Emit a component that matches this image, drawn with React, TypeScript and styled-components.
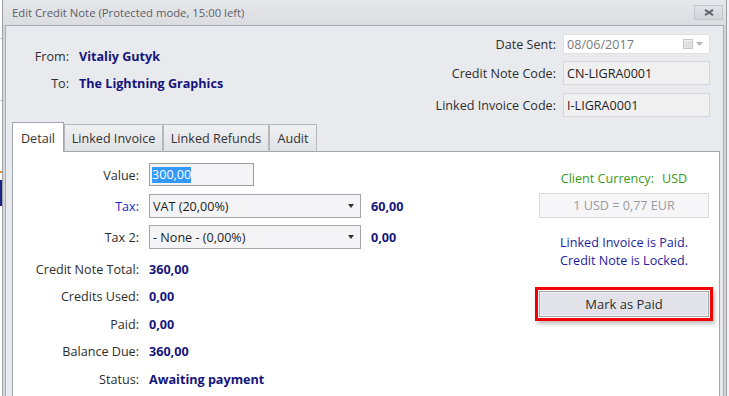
import React from "react";
import styled, { createGlobalStyle } from "styled-components";

const GlobalStyle = createGlobalStyle`
  html, body {
    margin: 0;
    padding: 0;
  }
  body {
    background: #f4f4f4;
    font-family: "Open Sans", "Noto Sans", "Liberation Sans", sans-serif;
    font-size: 12.6px;
    color: #2e2e2e;
    overflow: hidden;
  }
`;

const App: React.FC = () => {
  return (
    <>
      <GlobalStyle />
      <Screen>
        <Backdrop />
        <Window>
          <TitleBar>
            <Title>Edit Credit Note (Protected mode, 15:00 left)</Title>
            <CloseButton>
              <svg width="10" height="7" viewBox="0 0 10 7">
                <path d="M1 0.8 L9 6.2 M9 0.8 L1 6.2" stroke="#66686e" strokeWidth="2" />
              </svg>
            </CloseButton>
          </TitleBar>

          <Body>
            <Header>
              <Parties>
                <PartyLabel>From:</PartyLabel>
                <PartyName>Vitaliy Gutyk</PartyName>
                <PartyLabel>To:</PartyLabel>
                <PartyName>The Lightning Graphics</PartyName>
              </Parties>

              <Codes>
                <CodeRow $h={20} $top={8}>
                  <CodeLabel>Date Sent:</CodeLabel>
                  <DateBox>
                    <span>08/06/2017</span>
                    <CalendarIcon>
                      <svg width="10" height="10" viewBox="0 0 10 10">
                        <rect x="0.5" y="0.5" width="9" height="9" fill="#f4f4f4" stroke="#c4c4c4" />
                        <path d="M0.5 3 H9.5 M0.5 5.3 H9.5 M0.5 7.6 H9.5 M3 3 V9.5 M5.3 3 V9.5 M7.6 3 V9.5" stroke="#d0d0d0" strokeWidth="0.8" />
                      </svg>
                      <svg width="7" height="4" viewBox="0 0 7 4">
                        <path d="M0 0 H7 L3.5 4 Z" fill="#b4b4b8" />
                      </svg>
                    </CalendarIcon>
                  </DateBox>
                </CodeRow>
                <CodeRow $h={24} $top={7}>
                  <CodeLabel>Credit Note Code:</CodeLabel>
                  <CodeBox>CN-LIGRA0001</CodeBox>
                </CodeRow>
                <CodeRow $h={24} $top={8}>
                  <CodeLabel>Linked Invoice Code:</CodeLabel>
                  <CodeBox>I-LIGRA0001</CodeBox>
                </CodeRow>
              </Codes>
            </Header>

            <Tabs>
              <Tab $active $w={52}>Detail</Tab>
              <Tab $w={99}>Linked Invoice</Tab>
              <Tab $w={106}>Linked Refunds</Tab>
              <Tab $w={48}>Audit</Tab>
            </Tabs>

            <Panel>
              <Form>
                <Row $h={31}>
                  <Label>Value:</Label>
                  <ValueInput>
                    <Selected>300,00</Selected>
                  </ValueInput>
                </Row>
                <Row $h={31}>
                  <Label $link>Tax:</Label>
                  <Select>
                    <span>VAT (20,00%)</span>
                    <Caret />
                  </Select>
                  <Amount>60,00</Amount>
                </Row>
                <Row $h={31}>
                  <Label>Tax 2:</Label>
                  <Select>
                    <span>- None - (0,00%)</span>
                    <Caret />
                  </Select>
                  <Amount>0,00</Amount>
                </Row>
                <Row $h={27.5} $top={3}>
                  <Label>Credit Note Total:</Label>
                  <Amount>360,00</Amount>
                </Row>
                <Row $h={27.5}>
                  <Label>Credits Used:</Label>
                  <Amount>0,00</Amount>
                </Row>
                <Row $h={27.5}>
                  <Label>Paid:</Label>
                  <Amount>0,00</Amount>
                </Row>
                <Row $h={27.5}>
                  <Label>Balance Due:</Label>
                  <Amount>360,00</Amount>
                </Row>
                <Row $h={27.5}>
                  <Label>Status:</Label>
                  <Amount>Awaiting payment</Amount>
                </Row>
              </Form>

              <SideColumn>
                <Currency>
                  Client Currency:<CurrencyCode>USD</CurrencyCode>
                </Currency>
                <RateBox>1 USD = 0,77 EUR</RateBox>
                <Notice>
                  Linked Invoice is Paid.
                  <br />
                  Credit Note is Locked.
                </Notice>
                <Highlight>
                  <ActionButton type="button">Mark as Paid</ActionButton>
                </Highlight>
              </SideColumn>
            </Panel>
          </Body>
        </Window>
      </Screen>
    </>
  );
};

export default App;

const Screen = styled.div`
  display: flex;
  width: 729px;
  height: 396px;
  overflow: hidden;
`;

// bits of the application behind the dialog
const Backdrop = styled.div`
  width: 2px;
  flex-shrink: 0;
  background: linear-gradient(
    to bottom,
    #ffffff 0 38px,
    #c8c8c8 38px 39px,
    #ffffff 39px 100px,
    #c8c8c8 100px 101px,
    #ffffff 101px 171px,
    #e8862a 171px 173px,
    #ffffff 173px 180px,
    #1c2484 180px 206px,
    #ffffff 206px
  );
`;

const Window = styled.div`
  width: 723px;
  height: 396px;
  display: flex;
  flex-direction: column;
  border-left: 1px solid #9c9ea6;
  border-right: 1px solid #9c9ea6;
  background: #d6d7dc;
`;

const TitleBar = styled.div`
  height: 25px;
  flex-shrink: 0;
  display: flex;
  align-items: center;
  justify-content: space-between;
  padding: 0 3px 0 9px;
  background: linear-gradient(#e6e7ea, #dcdde1);
`;

const Title = styled.div`
  color: #5c5f66;
  font-size: 11.3px;
  padding-bottom: 1px;
`;

const CloseButton = styled.div`
  width: 27px;
  height: 13px;
  display: flex;
  align-items: center;
  justify-content: center;
  border: 1px solid #c4c5ca;
  background: linear-gradient(#e2e3e7, #d4d5da);
`;

const Body = styled.div`
  flex: 1;
  min-height: 0;
  display: flex;
  flex-direction: column;
  margin: 0 2px;
  padding: 0 3px 0 6px;
  border: 1px solid #a9abb2;
  border-bottom: none;
  background: #e9eaee;
`;

const Header = styled.div`
  height: 97px;
  flex-shrink: 0;
  display: flex;
  justify-content: space-between;
  padding-right: 10px;
`;

const Parties = styled.div`
  display: grid;
  grid-template-columns: 57px auto;
  column-gap: 10px;
  row-gap: 9px;
  align-content: start;
  margin-top: 22px;
  line-height: 18px;
`;

const PartyLabel = styled.div`
  text-align: right;
  color: #2e2e2e;
`;

const PartyName = styled.div`
  font-weight: 700;
  color: #14147c;
`;

const Codes = styled.div`
  display: flex;
  flex-direction: column;
`;

const CodeRow = styled.div<{ $h: number; $top: number }>`
  display: flex;
  align-items: center;
  justify-content: flex-end;
  gap: 7px;
  height: ${(p) => p.$h}px;
  margin-top: ${(p) => p.$top}px;
`;

const CodeLabel = styled.div`
  color: #2e2e2e;
  padding-top: 1px;
`;

const CodeBox = styled.div`
  box-sizing: border-box;
  width: 147px;
  height: 100%;
  display: flex;
  align-items: center;
  padding-left: 3px;
  border: 1px solid #d6d6da;
  background: #f0f0f0;
  color: #1e1e1e;
`;

const DateBox = styled(CodeBox)`
  justify-content: space-between;
  padding-right: 6px;
  background: #ffffff;
  border-color: #e0e0e3;
  color: #7a7a7a;
`;

const CalendarIcon = styled.div`
  display: flex;
  align-items: center;
  gap: 3px;
`;

const Tabs = styled.div`
  display: flex;
  align-items: flex-end;
  height: 29px;
  flex-shrink: 0;
  margin-bottom: -1px;
  position: relative;
  z-index: 1;
`;

const Tab = styled.div<{ $active?: boolean; $w: number }>`
  box-sizing: border-box;
  width: ${(p) => p.$w}px;
  height: ${(p) => (p.$active ? 30 : 28)}px;
  display: flex;
  align-items: center;
  justify-content: center;
  padding-top: 1px;
  border: 1px solid ${(p) => (p.$active ? "#a3a5ac" : "#b6b8be")};
  border-bottom: ${(p) => (p.$active ? "none" : "1px solid #a3a5ac")};
  background: ${(p) =>
    p.$active ? "#ffffff" : "linear-gradient(#eff0f2, #e1e2e6)"};
  color: #333333;
`;

const Panel = styled.div`
  flex: 1;
  display: flex;
  justify-content: space-between;
  border: 1px solid #a3a5ac;
  border-bottom: none;
  background: #ffffff;
`;

const Form = styled.div`
  display: flex;
  flex-direction: column;
  padding-top: 7px;
`;

const Row = styled.div<{ $h: number; $top?: number }>`
  display: grid;
  grid-template-columns: 126px auto auto;
  column-gap: 10px;
  align-items: center;
  justify-content: start;
  height: ${(p) => p.$h}px;
  margin-top: ${(p) => p.$top ?? 0}px;
`;

const Label = styled.div<{ $link?: boolean }>`
  text-align: right;
  padding-top: 1px;
  color: ${(p) => (p.$link ? "#2424d4" : "#2e2e2e")};
`;

const ValueInput = styled.div`
  box-sizing: border-box;
  width: 105px;
  height: 23px;
  display: flex;
  align-items: center;
  padding-left: 2px;
  border: 1px solid #9c9ca4;
  background: #f4f4f6;
`;

const Selected = styled.span`
  background: #3399ff;
  color: #ffffff;
  line-height: 16px;
`;

const Select = styled.div`
  box-sizing: border-box;
  width: 212px;
  height: 24px;
  display: flex;
  align-items: center;
  justify-content: space-between;
  padding: 1px 6px 0 3px;
  border: 1px solid #a4a4ac;
  background: #f4f4f6;
  color: #1e1e1e;
`;

const Caret = styled.span`
  width: 0;
  height: 0;
  border-left: 3.5px solid transparent;
  border-right: 3.5px solid transparent;
  border-top: 4px solid #333333;
`;

const Amount = styled.div`
  font-weight: 700;
  padding-top: 1px;
  color: #14147c;
`;

const SideColumn = styled.div`
  width: 178px;
  display: flex;
  flex-direction: column;
  align-items: center;
  padding-top: 19px;
  margin-right: 6px;
`;

const Currency = styled.div`
  line-height: 16px;
  color: #3a9a1c;
`;

const CurrencyCode = styled.span`
  margin-left: 8px;
`;

const RateBox = styled.div`
  box-sizing: border-box;
  width: 170px;
  height: 25px;
  margin-top: 6px;
  display: flex;
  align-items: center;
  justify-content: center;
  border: 1px solid #d8d9dc;
  background: #f6f6f8;
  color: #9a9a9e;
`;

const Notice = styled.div`
  margin-top: 16px;
  line-height: 18px;
  text-align: center;
  color: #1c1ca4;
`;

const Highlight = styled.div`
  box-sizing: border-box;
  width: 178px;
  margin-top: 17px;
  padding: 1px;
  border: 3px solid #f00000;
  background: #ffffff;
  box-shadow: 2px 3px 4px rgba(0, 0, 0, 0.25);
`;

const ActionButton = styled.button`
  box-sizing: border-box;
  width: 100%;
  height: 26px;
  display: block;
  border: 1px solid #a4a5ab;
  box-shadow: inset 0 0 0 1px #f2f2f4;
  background: #e2e3e8;
  font-family: inherit;
  font-size: 13px;
  color: #2e2e2e;
  padding: 0;
`;
